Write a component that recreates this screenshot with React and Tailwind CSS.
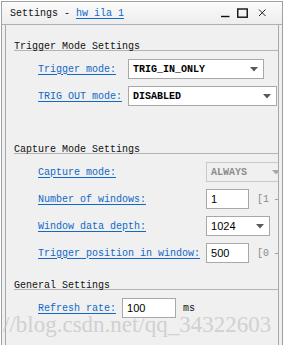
import React from 'react';

const MONO = "font-['Liberation_Mono','DejaVu_Sans_Mono',monospace]";

function Caret({ color = '#5a5a5a' }) {
  return (
    <svg width="8" height="5" viewBox="0 0 8 5" className="shrink-0">
      <path d="M0 0 H8 L4 4.5 Z" fill={color} />
    </svg>
  );
}

function Select({ value, width, disabled, numeric }) {
  return (
    <div
      className={`flex h-[20px] shrink-0 items-center justify-between pl-[4px] pr-[5px] border ${width} ${
        disabled ? 'border-[#cacaca] bg-[#f0f0f0] text-[#8c8c8c]' : 'border-[#a8a8a8] bg-white text-black'
      }`}
    >
      <span
        className={
          numeric
            ? "font-['Liberation_Sans',Arial,sans-serif] text-[11px]"
            : `${MONO} text-[10px] font-bold`
        }
      >
        {value}
      </span>
      <Caret color={disabled ? '#a8a8a8' : '#5a5a5a'} />
    </div>
  );
}

function Input({ value, width }) {
  return (
    <div
      className={`flex h-[20px] shrink-0 items-center border border-[#a8a8a8] bg-white pl-[4px] text-black font-['Liberation_Sans',Arial,sans-serif] text-[11px] ${width}`}
    >
      {value}
    </div>
  );
}

function Label({ children }) {
  return (
    <span className={`${MONO} text-[10px] text-[#1068c8] underline underline-offset-[2px] whitespace-nowrap`}>
      {children}
    </span>
  );
}

// section title with a rule running to the panel's right edge
function Heading({ children, className }) {
  return (
    <div
      className={`ml-[8px] h-[13px] border-b border-[#b4b4b4] ${MONO} text-[10px] leading-[18px] text-[#111] whitespace-nowrap ${className}`}
    >
      {children}
    </div>
  );
}

function Range({ children }) {
  return <span className={`${MONO} text-[10px] text-[#8a8a8a] whitespace-nowrap`}>{children}</span>;
}

export default function App() {
  return (
    <div className="relative h-[345px] w-[283px] overflow-hidden bg-white">
      <div className="ml-[1px] mt-[1px] flex h-[344px] w-[282px] flex-col border-l border-r border-t border-[#a0a0a0] bg-[#f0f0f0]">
        {/* Title bar */}
        <div className="flex h-[23px] shrink-0 items-center border-b border-[#b0b0b0] bg-linear-to-b from-[#fbfbfb] to-[#ededed] pl-[8px] pr-[15px]">
          <span className={`${MONO} text-[10px] text-[#111] whitespace-pre`}>Settings - </span>
          <span className={`${MONO} text-[10px] text-[#1068c8] underline underline-offset-[2px]`}>hw ila 1</span>
          <div className="ml-auto flex items-center gap-[7px]">
            <svg width="9" height="10" viewBox="0 0 9 10">
              <path d="M0 8.5 H8.5" stroke="#111" strokeWidth="1.4" />
            </svg>
            <svg width="11" height="10" viewBox="0 0 11 10">
              <rect x="0.75" y="1" width="9.5" height="8.2" fill="none" stroke="#111" strokeWidth="1.4" />
            </svg>
            <svg width="9" height="10" viewBox="0 0 9 10" className="ml-[3px]">
              <path d="M1 1.5 L7.5 8 M7.5 1.5 L1 8" stroke="#222" strokeWidth="1" />
            </svg>
          </div>
        </div>

        {/* Body */}
        <div className="flex-1 px-[3px]">
          <div className="h-full overflow-hidden border-l border-r border-[#a8a8a8]">
            <Heading className="mt-[13px]">Trigger Mode Settings</Heading>
            <div className="grid grid-cols-[auto_auto] items-center justify-start gap-x-[6px] gap-y-[7px] pl-[32px] pt-[8px]">
              <Label>Trigger mode:</Label>
              <Select value="TRIG_IN_ONLY" width="w-[136px]" />
              <Label>TRIG OUT mode:</Label>
              <Select value="DISABLED" width="w-[149px]" />
            </div>

            <Heading className="mt-[35px]">Capture Mode Settings</Heading>
            <div className="grid grid-cols-[auto_auto] items-center justify-start gap-x-[6px] gap-y-[7px] pl-[32px] pt-[8px]">
              <Label>Capture mode:</Label>
              <Select value="ALWAYS" width="w-[80px]" disabled />
              <Label>Number of windows:</Label>
              <div className="flex items-center gap-[8px]">
                <Input value="1" width="w-[43px]" />
                <Range>[1 — 1024]</Range>
              </div>
              <Label>Window data depth:</Label>
              <div className="flex items-center gap-[8px]">
                <Select value="1024" width="w-[64px]" numeric />
                <Range>[</Range>
              </div>
              <Label>Trigger position in window:</Label>
              <div className="flex items-center gap-[8px]">
                <Input value="500" width="w-[43px]" />
                <Range>[0 — 1023]</Range>
              </div>
            </div>

            <Heading className="mt-[14px]">General Settings</Heading>
            <div className="flex items-center gap-[6px] pl-[32px] pt-[8px]">
              <Label>Refresh rate:</Label>
              <Input value="100" width="w-[54px]" />
              <span className={`${MONO} ml-[1px] text-[10px] text-[#111]`}>ms</span>
            </div>
          </div>
        </div>
      </div>

      {/* watermark overlay */}
      <div className="pointer-events-none absolute left-[3px] top-[313px] whitespace-nowrap font-['Liberation_Serif','Times_New_Roman',serif] text-[23px] leading-none text-[#c4c4c4] opacity-70">
        //blog.csdn.net/qq_34322603
      </div>
    </div>
  );
}
